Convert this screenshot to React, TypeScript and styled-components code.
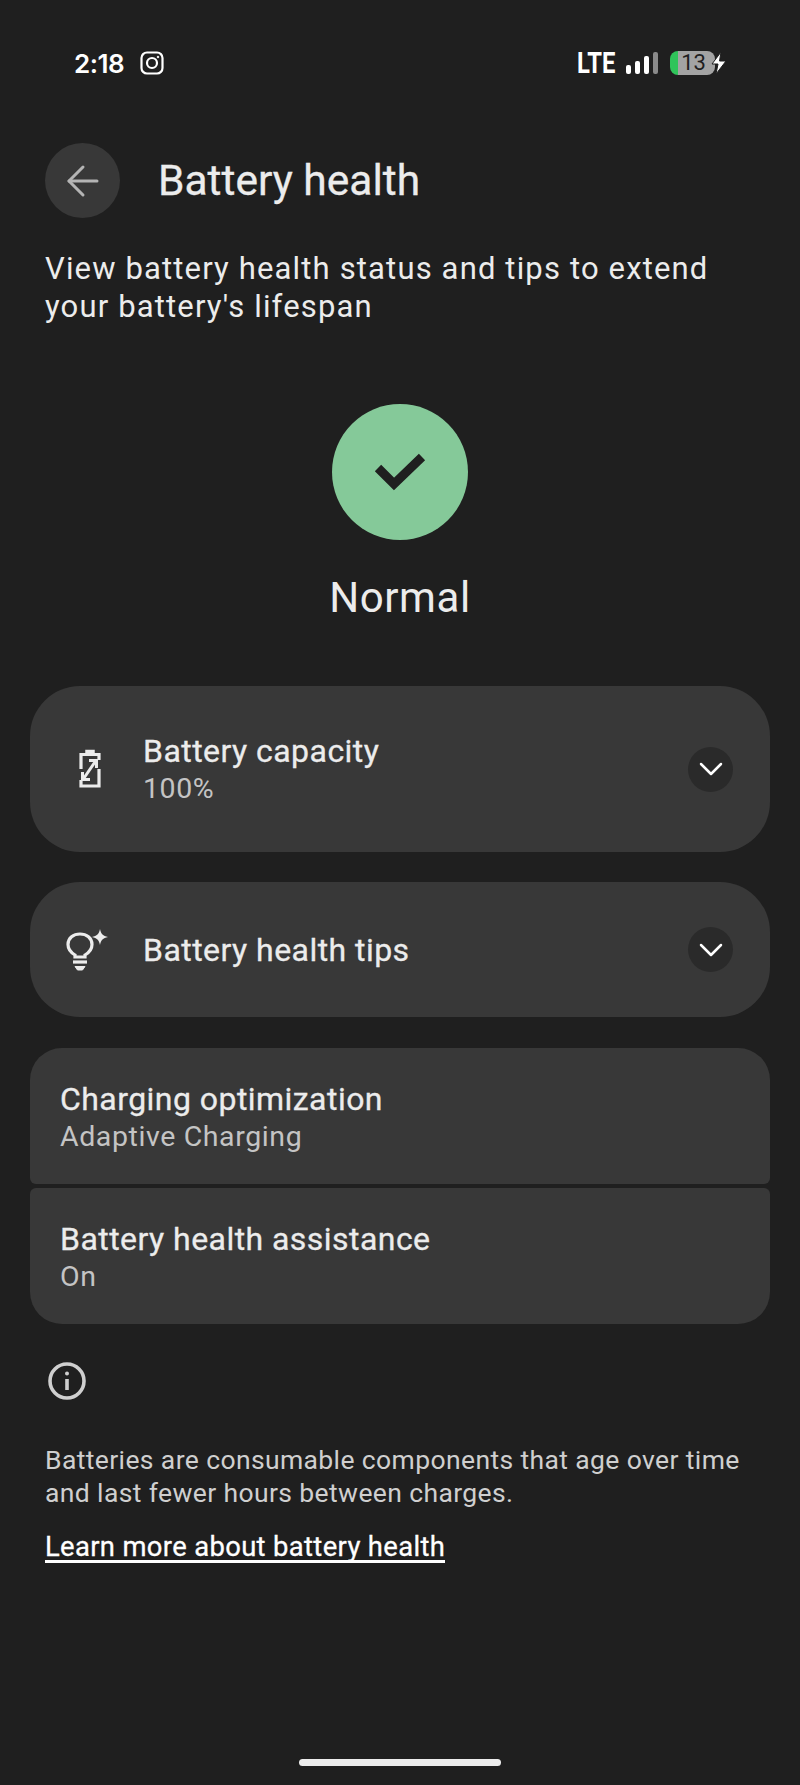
import React from 'react';
import styled, { createGlobalStyle } from 'styled-components';
import { ArrowLeft, ChevronDown } from 'lucide-react';

const GlobalStyle = createGlobalStyle`
  html, body {
    margin: 0;
    padding: 0;
    background: #1f1f1f;
  }
`;

const Page = styled.div`
  box-sizing: border-box;
  width: 800px;
  height: 1785px;
  display: flex;
  flex-direction: column;
  background: #1f1f1f;
  color: #ececec;
  font-family: Roboto, "Liberation Sans", sans-serif;
  overflow: hidden;
`;

const StatusBar = styled.div`
  height: 46px;
  margin-top: 40px;
  padding: 0 73px 0 74px;
  display: flex;
  align-items: center;
  justify-content: space-between;
`;

const StatusGroup = styled.div`
  display: flex;
  align-items: center;
`;

const Clock = styled.span`
  font-family: Inter, sans-serif;
  font-size: 26px;
  font-weight: 600;
  letter-spacing: -0.5px;
  color: #fff;
  margin-right: 16px;
`;

const Network = styled.span`
  font-family: Roboto, sans-serif;
  font-size: 29px;
  font-weight: 700;
  color: #fff;
  transform: scaleX(0.82);
  transform-origin: left center;
  width: 49px;
`;

const Bars = styled.div`
  display: flex;
  align-items: flex-end;
  gap: 4px;
  height: 22px;
  margin-right: 12px;
`;

const Bar = styled.div<{ $h: number; $dim?: boolean }>`
  width: 5px;
  height: ${p => p.$h}px;
  border-radius: 2px;
  background: ${p => (p.$dim ? '#8a8a8a' : '#fff')};
`;

const BatteryPill = styled.div`
  width: 45px;
  height: 24px;
  border-radius: 8px;
  background: linear-gradient(90deg, #2fc45a 0 8px, #a3a3a3 8px);
  color: #1f1f1f;
  font-family: Roboto, sans-serif;
  font-size: 22px;
  line-height: 24px;
  text-align: center;
  padding-left: 2px;
  box-sizing: border-box;
`;

const BoltSlot = styled.div`
  display: flex;
  margin-left: -4px;
`;

const Header = styled.div`
  margin-top: 57px;
  padding-left: 45px;
  display: flex;
  align-items: center;
  gap: 38px;
`;

const BackButton = styled.div`
  width: 75px;
  height: 75px;
  border-radius: 50%;
  background: #383838;
  color: #b4b4b4;
  display: flex;
  align-items: center;
  justify-content: center;
`;

const Title = styled.h1`
  margin: 0;
  font-size: 42.5px;
  font-weight: 400;
  color: #ececec;
  -webkit-text-stroke: 0.3px #ececec;
`;

const Description = styled.p`
  margin: 32px 0 0;
  padding: 0 45px;
  font-size: 31px;
  line-height: 38px;
  letter-spacing: 1.15px;
  color: #ececec;
`;

const StatusBlock = styled.div`
  margin-top: 78px;
  display: flex;
  flex-direction: column;
  align-items: center;
`;

const StatusCircle = styled.div`
  width: 136px;
  height: 136px;
  border-radius: 50%;
  background: #85c999;
  display: flex;
  align-items: center;
  justify-content: center;
`;

const StatusLabel = styled.div`
  margin-top: 33px;
  font-size: 42px;
  line-height: 50px;
  letter-spacing: 0.6px;
  color: #ececec;
`;

const Cards = styled.div`
  margin: 63px 30px 0;
  display: flex;
  flex-direction: column;
  gap: 30px;
`;

const ExpandCard = styled.div<{ $h: number }>`
  height: ${p => p.$h}px;
  border-radius: 50px;
  background: #383838;
  display: flex;
  align-items: center;
  box-sizing: border-box;
  padding-right: 37px;
`;

const CardIcon = styled.div<{ $shift: number }>`
  box-sizing: border-box;
  width: 113px;
  flex-shrink: 0;
  display: flex;
  justify-content: center;
  padding-left: ${p => p.$shift}px;
`;

const CardText = styled.div`
  flex: 1;
  display: flex;
  flex-direction: column;
`;

const ItemTitle = styled.div`
  font-size: 32px;
  line-height: 38px;
  letter-spacing: 0.45px;
  color: #ececec;
  -webkit-text-stroke: 0.3px #ececec;
`;

const ItemSub = styled.div`
  margin-top: 1px;
  font-size: 28.5px;
  line-height: 36px;
  letter-spacing: 0.6px;
  color: #c4c4c4;
`;

const ExpandButton = styled.div`
  width: 45px;
  height: 45px;
  border-radius: 50%;
  background: #2a2a2a;
  color: #fff;
  display: flex;
  align-items: center;
  justify-content: center;
`;

const SettingsGroup = styled.div`
  display: flex;
  flex-direction: column;
  gap: 4px;
  margin-top: 1px;
`;

const SettingsRow = styled.div<{ $first?: boolean }>`
  height: 136px;
  box-sizing: border-box;
  padding: 32px 30px 0;
  background: #383838;
  border-radius: ${p => (p.$first ? '32px 32px 6px 6px' : '6px 6px 32px 32px')};
`;

const InfoSection = styled.div`
  margin: 38px 45px 0;
  display: flex;
  flex-direction: column;
`;

const InfoIcon = styled.div`
  width: 38px;
  height: 38px;
  margin-left: 3px;
  color: #cfcfcf;
  margin-bottom: 43px;
`;

const InfoText = styled.p`
  margin: 0;
  font-size: 26.5px;
  line-height: 33px;
  letter-spacing: 0.38px;
  color: #cfcfcf;
  white-space: nowrap;
`;

const LearnMore = styled.a`
  margin-top: 26px;
  align-self: flex-start;
  font-size: 27.4px;
  line-height: 25px;
  letter-spacing: 0.35px;
  color: #fff;
  -webkit-text-stroke: 0.3px #fff;
  border-bottom: 3px solid #fff;
`;

const HomeBar = styled.div`
  margin: auto auto 19px;
  width: 202px;
  height: 7px;
  border-radius: 4px;
  background: #ececec;
`;

const InstagramIcon = () => (
  <svg width="24" height="24" viewBox="0 0 24 24" fill="none" stroke="#fff" strokeWidth="2.2">
    <rect x="1.5" y="1.5" width="21" height="21" rx="5.5" />
    <circle cx="12" cy="12" r="5" />
    <circle cx="18" cy="6" r="0.8" fill="#fff" strokeWidth="1" />
  </svg>
);

const BoltIcon = () => (
  <svg width="16" height="22" viewBox="0 0 16 22" fill="#fff" stroke="#1f1f1f" strokeWidth="1">
    <path d="M10 0 L1 12 H7 L5 22 L15 9 H8.5 Z" />
  </svg>
);

const CheckIcon = () => (
  <svg width="60" height="40" viewBox="0 0 60 40" fill="none" stroke="#1f1f1f" strokeWidth="9">
    <polyline points="8,16 24,32 52,5" />
  </svg>
);

const BatteryIcon = () => (
  <svg width="22" height="40" viewBox="0 0 22 40" fill="none" stroke="#ececec" strokeWidth="3.2">
    <path d="M7 4 V1.5 H15 V4" fill="#ececec" strokeWidth="1.5" />
    <path d="M2 20 V5.5 H20 V11" />
    <path d="M20 20 V37 H2 V31" />
    <path d="M5 29 L16 13" strokeWidth="3" />
    <path d="M10 11.5 H17.5 V19" strokeWidth="3" />
    <path d="M3.5 23 V30.5 H11" strokeWidth="3" />
  </svg>
);

const TipsIcon = () => (
  <svg width="44" height="42" viewBox="0 0 44 42" fill="none" stroke="#ececec" strokeWidth="3.2">
    <path d="M9 26 C4 23 2 19 2 15.5 C2 9 7.5 5 14 5 C20.5 5 26 9 26 15.5 C26 19 24 23 19 26 V28 H9 Z" />
    <path d="M7 33 H21" />
    <path d="M9 37.5 H19 L16.5 41 H11.5 Z" fill="#ececec" strokeWidth="1" />
    <path d="M34 0 C35 5 37 7 42 8 C37 9 35 11 34 16 C33 11 31 9 26 8 C31 7 33 5 34 0 Z" fill="#ececec" stroke="none" />
  </svg>
);

const InfoGlyph = () => (
  <svg width="38" height="38" viewBox="0 0 38 38" fill="none" stroke="currentColor" strokeWidth="3.6">
    <circle cx="19" cy="19" r="17" />
    <path d="M19 17 V28" />
    <circle cx="19" cy="11.5" r="2" fill="currentColor" stroke="none" />
  </svg>
);

const App: React.FC = () => {
  return (
    <Page>
      <GlobalStyle />
      <StatusBar>
        <StatusGroup>
          <Clock>2:18</Clock>
          <InstagramIcon />
        </StatusGroup>
        <StatusGroup>
          <Network>LTE</Network>
          <Bars>
            <Bar $h={9} />
            <Bar $h={13} />
            <Bar $h={18} />
            <Bar $h={22} $dim />
          </Bars>
          <BatteryPill>13</BatteryPill>
          <BoltSlot>
            <BoltIcon />
          </BoltSlot>
        </StatusGroup>
      </StatusBar>

      <Header>
        <BackButton>
          <ArrowLeft size={48} strokeWidth={1.5} />
        </BackButton>
        <Title>Battery health</Title>
      </Header>

      <Description>
        View battery health status and tips to extend
        <br />
        your battery's lifespan
      </Description>

      <StatusBlock>
        <StatusCircle>
          <CheckIcon />
        </StatusCircle>
        <StatusLabel>Normal</StatusLabel>
      </StatusBlock>

      <Cards>
        <ExpandCard $h={166}>
          <CardIcon $shift={7}>
            <BatteryIcon />
          </CardIcon>
          <CardText>
            <ItemTitle>Battery capacity</ItemTitle>
            <ItemSub>100%</ItemSub>
          </CardText>
          <ExpandButton>
            <ChevronDown size={40} strokeWidth={1.5} />
          </ExpandButton>
        </ExpandCard>

        <ExpandCard $h={135}>
          <CardIcon $shift={3}>
            <TipsIcon />
          </CardIcon>
          <CardText>
            <ItemTitle>Battery health tips</ItemTitle>
          </CardText>
          <ExpandButton>
            <ChevronDown size={40} strokeWidth={1.5} />
          </ExpandButton>
        </ExpandCard>

        <SettingsGroup>
          <SettingsRow $first>
            <ItemTitle>Charging optimization</ItemTitle>
            <ItemSub>Adaptive Charging</ItemSub>
          </SettingsRow>
          <SettingsRow>
            <ItemTitle>Battery health assistance</ItemTitle>
            <ItemSub>On</ItemSub>
          </SettingsRow>
        </SettingsGroup>
      </Cards>

      <InfoSection>
        <InfoIcon>
          <InfoGlyph />
        </InfoIcon>
        <InfoText>
          Batteries are consumable components that age over time
          <br />
          and last fewer hours between charges.
        </InfoText>
        <LearnMore>Learn more about battery health</LearnMore>
      </InfoSection>

      <HomeBar />
    </Page>
  );
};

export default App;
